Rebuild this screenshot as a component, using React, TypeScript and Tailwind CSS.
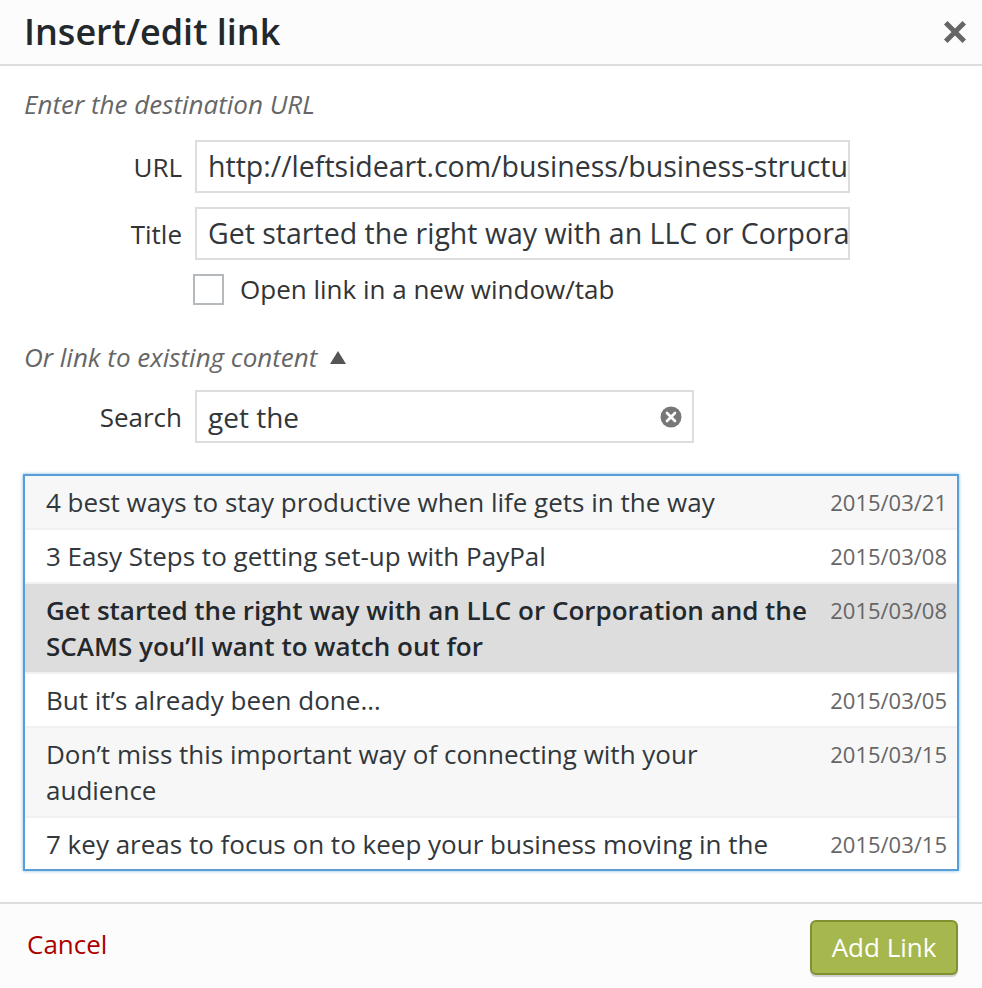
import React from "react";

type Row = { lines: string[]; date: string; cls: string; bold?: boolean };

const rows: Row[] = [
  { lines: ["4 best ways to stay productive when life gets in the way"], date: "2015/03/21", cls: "bg-[#f7f7f7]" },
  { lines: ["3 Easy Steps to getting set-up with PayPal"], date: "2015/03/08", cls: "bg-white" },
  {
    lines: ["Get started the right way with an LLC or Corporation and the", "SCAMS you\u2019ll want to watch out for"],
    date: "2015/03/08",
    cls: "bg-[#dddddd]",
    bold: true,
  },
  { lines: ["But it\u2019s already been done\u2026"], date: "2015/03/05", cls: "bg-white" },
  {
    lines: ["Don\u2019t miss this important way of connecting with your", "audience"],
    date: "2015/03/15",
    cls: "bg-[#f7f7f7]",
  },
  {
    lines: ["7 key areas to focus on to keep your business moving in the", "right direction"],
    date: "2015/03/15",
    cls: "bg-white",
  },
];

export default function App() {
  return (
    <div className="w-[982px] h-[988px] bg-white overflow-hidden font-['Open_Sans',sans-serif] text-[#32373c]">
      {/* Header */}
      <div className="h-[66px] flex items-center justify-between pl-[24px] pr-[15px] bg-[#fcfcfc] border-b-2 border-[#dddddd]">
        <h1 className="text-[36px] font-semibold leading-[64px] text-[#23282d]">Insert/edit link</h1>
        <svg width="24" height="24" viewBox="0 0 24 24" aria-label="Close">
          <path d="M4.5 4.5 L19.5 19.5 M19.5 4.5 L4.5 19.5" stroke="#666666" strokeWidth="5" strokeLinecap="square" />
        </svg>
      </div>

      {/* Body */}
      <div className="px-[24px] pt-[20px]">
        <p className="italic text-[26px] leading-[36px] text-[#666666]">Enter the destination URL</p>

        <div className="mt-[18px] flex items-center">
          <label className="w-[171px] pr-[13px] text-right text-[26px] leading-[36px] text-[#333333] shrink-0">URL</label>
          <div className="w-[655px] h-[53px] border-2 border-[#dddddd] bg-white pl-[11px] flex items-center overflow-hidden whitespace-nowrap text-[28.5px]">
            http://leftsideart.com/business/business-structure-llc-or-corporation/
          </div>
        </div>

        <div className="mt-[14px] flex items-center">
          <label className="w-[171px] pr-[13px] text-right text-[26px] leading-[36px] text-[#333333] shrink-0">Title</label>
          <div className="w-[655px] h-[53px] border-2 border-[#dddddd] bg-white pl-[11px] flex items-center overflow-hidden whitespace-nowrap text-[28.5px]">
            Get started the right way with an LLC or Corporation and the SCAMS you’ll want to watch out for
          </div>
        </div>

        <div className="mt-[14px] ml-[169px] flex items-center h-[31px]">
          <div className="w-[31px] h-[31px] border-2 border-[#b4b9be] bg-white shrink-0" />
          <span className="ml-[16px] text-[26px] leading-[31px] text-[#333333]">Open link in a new window/tab</span>
        </div>

        <div className="mt-[34px] flex items-center h-[36px]">
          <span className="italic text-[26px] leading-[36px] text-[#666666]">Or link to existing content</span>
          <svg className="ml-[13px]" width="16" height="13" viewBox="0 0 16 13">
            <polygon points="0,13 8,0 16,13" fill="#555555" />
          </svg>
        </div>

        <div className="mt-[15px] flex items-center">
          <label className="w-[171px] pr-[13px] text-right text-[26px] leading-[36px] text-[#333333] shrink-0">Search</label>
          <div className="w-[499px] h-[53px] border-2 border-[#dddddd] bg-white pl-[11px] pr-[10px] flex items-center justify-between">
            <span className="text-[28px] leading-[36px] text-[#32373c]">get the</span>
            <svg width="22" height="22" viewBox="0 0 22 22">
              <circle cx="11" cy="11" r="10.5" fill="#777777" />
              <path d="M7 7 L15 15 M15 7 L7 15" stroke="#ffffff" strokeWidth="2.6" strokeLinecap="round" />
            </svg>
          </div>
        </div>

        {/* Results */}
        <div className="mt-[31px] -ml-px w-[936px] h-[397px] border-2 border-[#5b9dd9] shadow-[0_0_3px_rgba(30,140,190,0.6)] overflow-hidden bg-white">
          {rows.map((r, i) => (
            <div key={i} className={`flex items-start pl-[21px] pr-[10px] py-[8px] border-b-2 border-[#f1f1f1] ${r.cls}`}>
              <div
                className={`flex-1 min-w-0 text-[26px] leading-[36px] ${r.bold ? "font-semibold text-[#23282d]" : "text-[#32373c]"}`}
              >
                {r.lines.map((l, j) => (
                  <div key={j} className="whitespace-nowrap">
                    {l}
                  </div>
                ))}
              </div>
              <div className="ml-[10px] shrink-0 text-[22px] leading-[36px] text-[#666666] whitespace-nowrap">{r.date}</div>
            </div>
          ))}
        </div>
      </div>

      {/* Footer */}
      <div className="mt-[31px] h-[86px] border-t-2 border-[#dddddd] bg-[#fcfcfc] flex items-center justify-between pl-[27px] pr-[24px]">
        <a className="text-[26px] leading-[36px] text-[#aa0000] -mt-[4px]">Cancel</a>
        <button className="w-[148px] h-[55px] mt-[2px] rounded-[6px] bg-[#a5b74d] border-2 border-[#7f9131] shadow-[0_2px_1px_rgba(0,0,0,0.18)] text-white text-[26px] leading-[36px] flex items-center justify-center">
          Add Link
        </button>
      </div>
    </div>
  );
}
